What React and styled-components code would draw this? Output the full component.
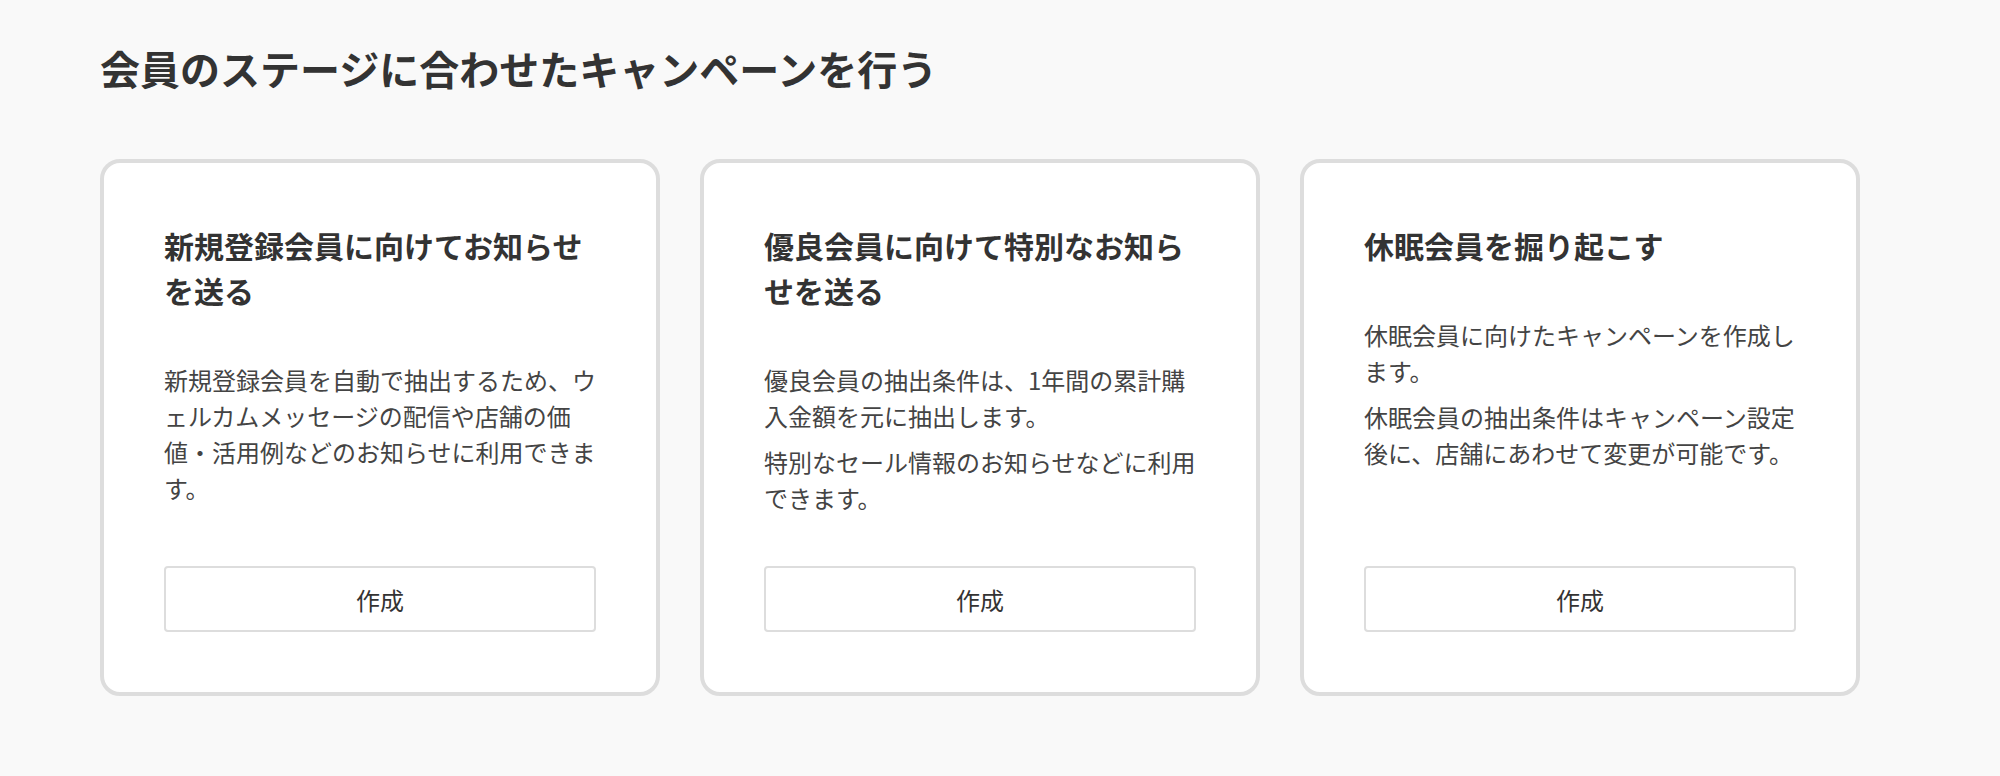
import styled, {createGlobalStyle} from 'styled-components'

// --- Global ---
const GlobalStyle = createGlobalStyle`
  html, body {
    margin: 0;
    padding: 0;
    background-color: #f9f9f9;
  }
  body {
    font-family: 'Noto Sans CJK JP', 'Noto Sans', sans-serif;
    color: #333333;
  }
  * {
    box-sizing: border-box;
  }
`

// --- Styled Components ---
const Page = styled.main`
  min-height: 776px;
  padding: 40px 100px 60px;
  background-color: #f9f9f9;
`

const Heading = styled.h1`
  margin: 0 0 63px;
  font-size: 40px;
  line-height: 56px;
  font-weight: 700;
  color: #333333;
`

const CardGrid = styled.div`
  display: grid;
  grid-template-columns: repeat(3, 560px);
  gap: 40px;
  align-items: stretch;
`

const Card = styled.section`
  display: flex;
  flex-direction: column;
  padding: 60px;
  background-color: #ffffff;
  border: 4px solid #dddddd;
  border-radius: 20px;
`

const CardTitle = styled.h2`
  margin: 0 0 49px;
  font-size: 30px;
  line-height: 45px;
  font-weight: 700;
  color: #333333;
`

const Description = styled.div`
  margin-bottom: 50px;
  line-break: normal;
`

const Paragraph = styled.p`
  margin: 0;
  font-size: 24px;
  line-height: 36px;
  color: #444444;

  & + & {
    margin-top: 10px;
  }
`

const CreateButton = styled.button`
  margin-top: auto;
  width: 100%;
  height: 66px;
  border: 2px solid #dddddd;
  border-radius: 4px;
  background-color: #ffffff;
  font-family: inherit;
  font-size: 24px;
  color: #333333;
  cursor: pointer;
`

const campaigns = [
  {
    id: 'new',
    title: '新規登録会員に向けてお知らせを送る',
    body: [
      '新規登録会員を自動で抽出するため、ウェルカムメッセージの配信や店舗の価値・活用例などのお知らせに利用できます。',
    ],
  },
  {
    id: 'premium',
    title: '優良会員に向けて特別なお知らせを送る',
    body: [
      '優良会員の抽出条件は、1年間の累計購入金額を元に抽出します。',
      '特別なセール情報のお知らせなどに利用できます。',
    ],
  },
  {
    id: 'dormant',
    title: '休眠会員を掘り起こす',
    body: [
      '休眠会員に向けたキャンペーンを作成します。',
      '休眠会員の抽出条件はキャンペーン設定後に、店舗にあわせて変更が可能です。',
    ],
  },
]

const App = () => (
  <>
    <GlobalStyle />
    <Page lang="ja">
      <Heading>会員のステージに合わせたキャンペーンを行う</Heading>
      <CardGrid>
        {campaigns.map(item => (
          <Card key={item.id}>
            <CardTitle>{item.title}</CardTitle>
            <Description>
              {item.body.map(text => (
                <Paragraph key={text}>{text}</Paragraph>
              ))}
            </Description>
            <CreateButton type="button">作成</CreateButton>
          </Card>
        ))}
      </CardGrid>
    </Page>
  </>
)

export default App
